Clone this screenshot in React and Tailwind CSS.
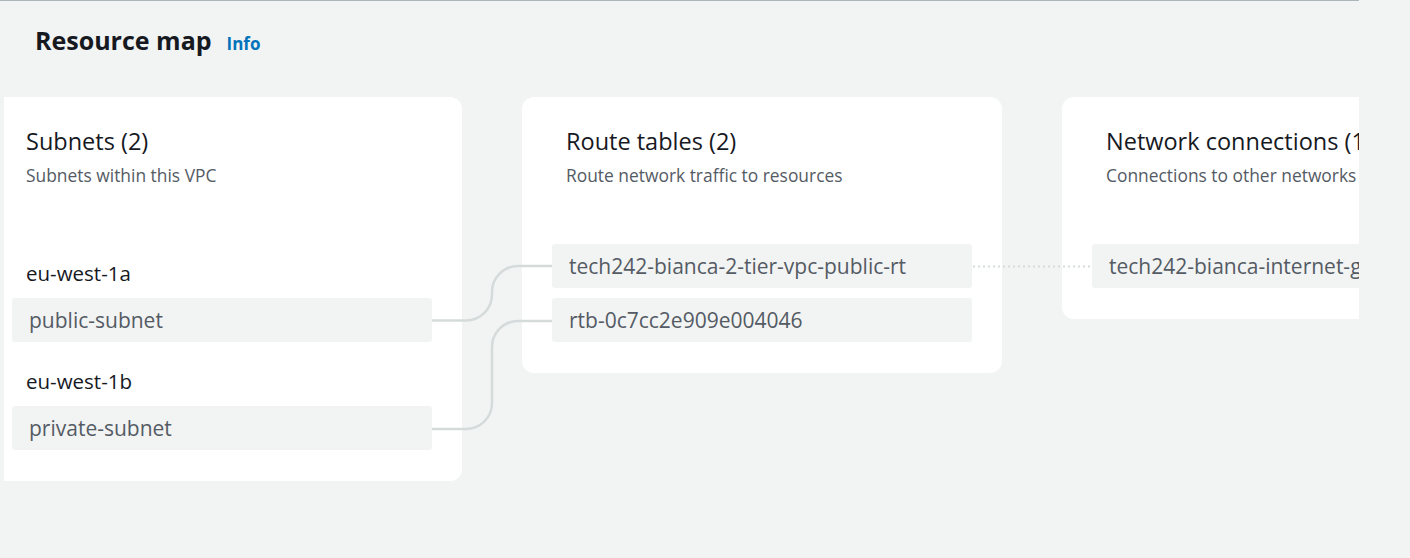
import React from "react";

const Box = ({ children }) => (
  <div className="w-[420px] h-[44px] -ml-[14px] bg-[#f2f3f3] rounded-[3px] pl-[17px] pt-[10px] text-[21px] leading-[24px] text-[#545b64] whitespace-nowrap overflow-hidden">
    {children}
  </div>
);

const Label = ({ children, className = "" }) => (
  <div className={"text-[20.5px] leading-[24px] text-[#16191f] " + className}>{children}</div>
);

const Card = ({ title, subtitle, children }) => (
  <div className="w-[480px] shrink-0 bg-white rounded-[12px] px-[30px] pt-[30px] pb-[31px]">
    <div className="pl-[14px]">
      <div className="text-[23.5px] leading-[28px] text-[#16191f] whitespace-nowrap">{title}</div>
      <div className="mt-[9px] text-[17.4px] leading-[22px] text-[#545b64] whitespace-nowrap">{subtitle}</div>
    </div>
    <div className="mt-[58px] pl-[14px] flex flex-col">{children}</div>
  </div>
);

export default function App() {
  return (
    <div
      className="relative w-[1410px] h-[558px] bg-[#f2f3f3] overflow-hidden"
      style={{ fontFamily: '"Open Sans", "Noto Sans", sans-serif' }}
    >
      <div className="w-[1359px] border-t border-[#aab7b8]">
        <div className="pl-[35px] pt-[24px] flex items-baseline gap-[15px]">
          <h1 className="text-[25px] leading-[30px] font-bold text-[#16191f]">Resource map</h1>
          <span className="text-[17px] font-bold text-[#0073bb]">Info</span>
        </div>
        <div className="mt-[40px] ml-[4px] overflow-hidden">
          <div className="flex items-start gap-[60px] -ml-[22px]">
            <Card title="Subnets (2)" subtitle="Subnets within this VPC">
              <Label className="mt-[17px]">eu-west-1a</Label>
              <div className="mt-[13px]">
                <Box>public-subnet</Box>
              </div>
              <Label className="mt-[27px]">eu-west-1b</Label>
              <div className="mt-[13px]">
                <Box>private-subnet</Box>
              </div>
            </Card>
            <Card title="Route tables (2)" subtitle="Route network traffic to resources">
              <Box>tech242-bianca-2-tier-vpc-public-rt</Box>
              <div className="mt-[10px]">
                <Box>rtb-0c7cc2e909e004046</Box>
              </div>
            </Card>
            <Card title="Network connections (1)" subtitle="Connections to other networks">
              <Box>tech242-bianca-internet-gateway</Box>
            </Card>
          </div>
        </div>
      </div>
      <svg
        className="absolute top-0 left-0 pointer-events-none"
        width="1410"
        height="558"
        viewBox="0 0 1410 558"
        fill="none"
      >
        <path
          d="M432 320.5 H466 A26 26 0 0 0 492 294.5 V292 A26 26 0 0 1 518 266 H552"
          stroke="#d5dbdb"
          strokeWidth="2.5"
        />
        <path
          d="M432 429 H466 A26 26 0 0 0 492 403 V347 A26 26 0 0 1 518 321 H552"
          stroke="#d5dbdb"
          strokeWidth="2.5"
        />
        <path d="M973 266.5 H1091" stroke="#d5dbdb" strokeWidth="2" strokeDasharray="2 3" />
      </svg>
    </div>
  );
}
